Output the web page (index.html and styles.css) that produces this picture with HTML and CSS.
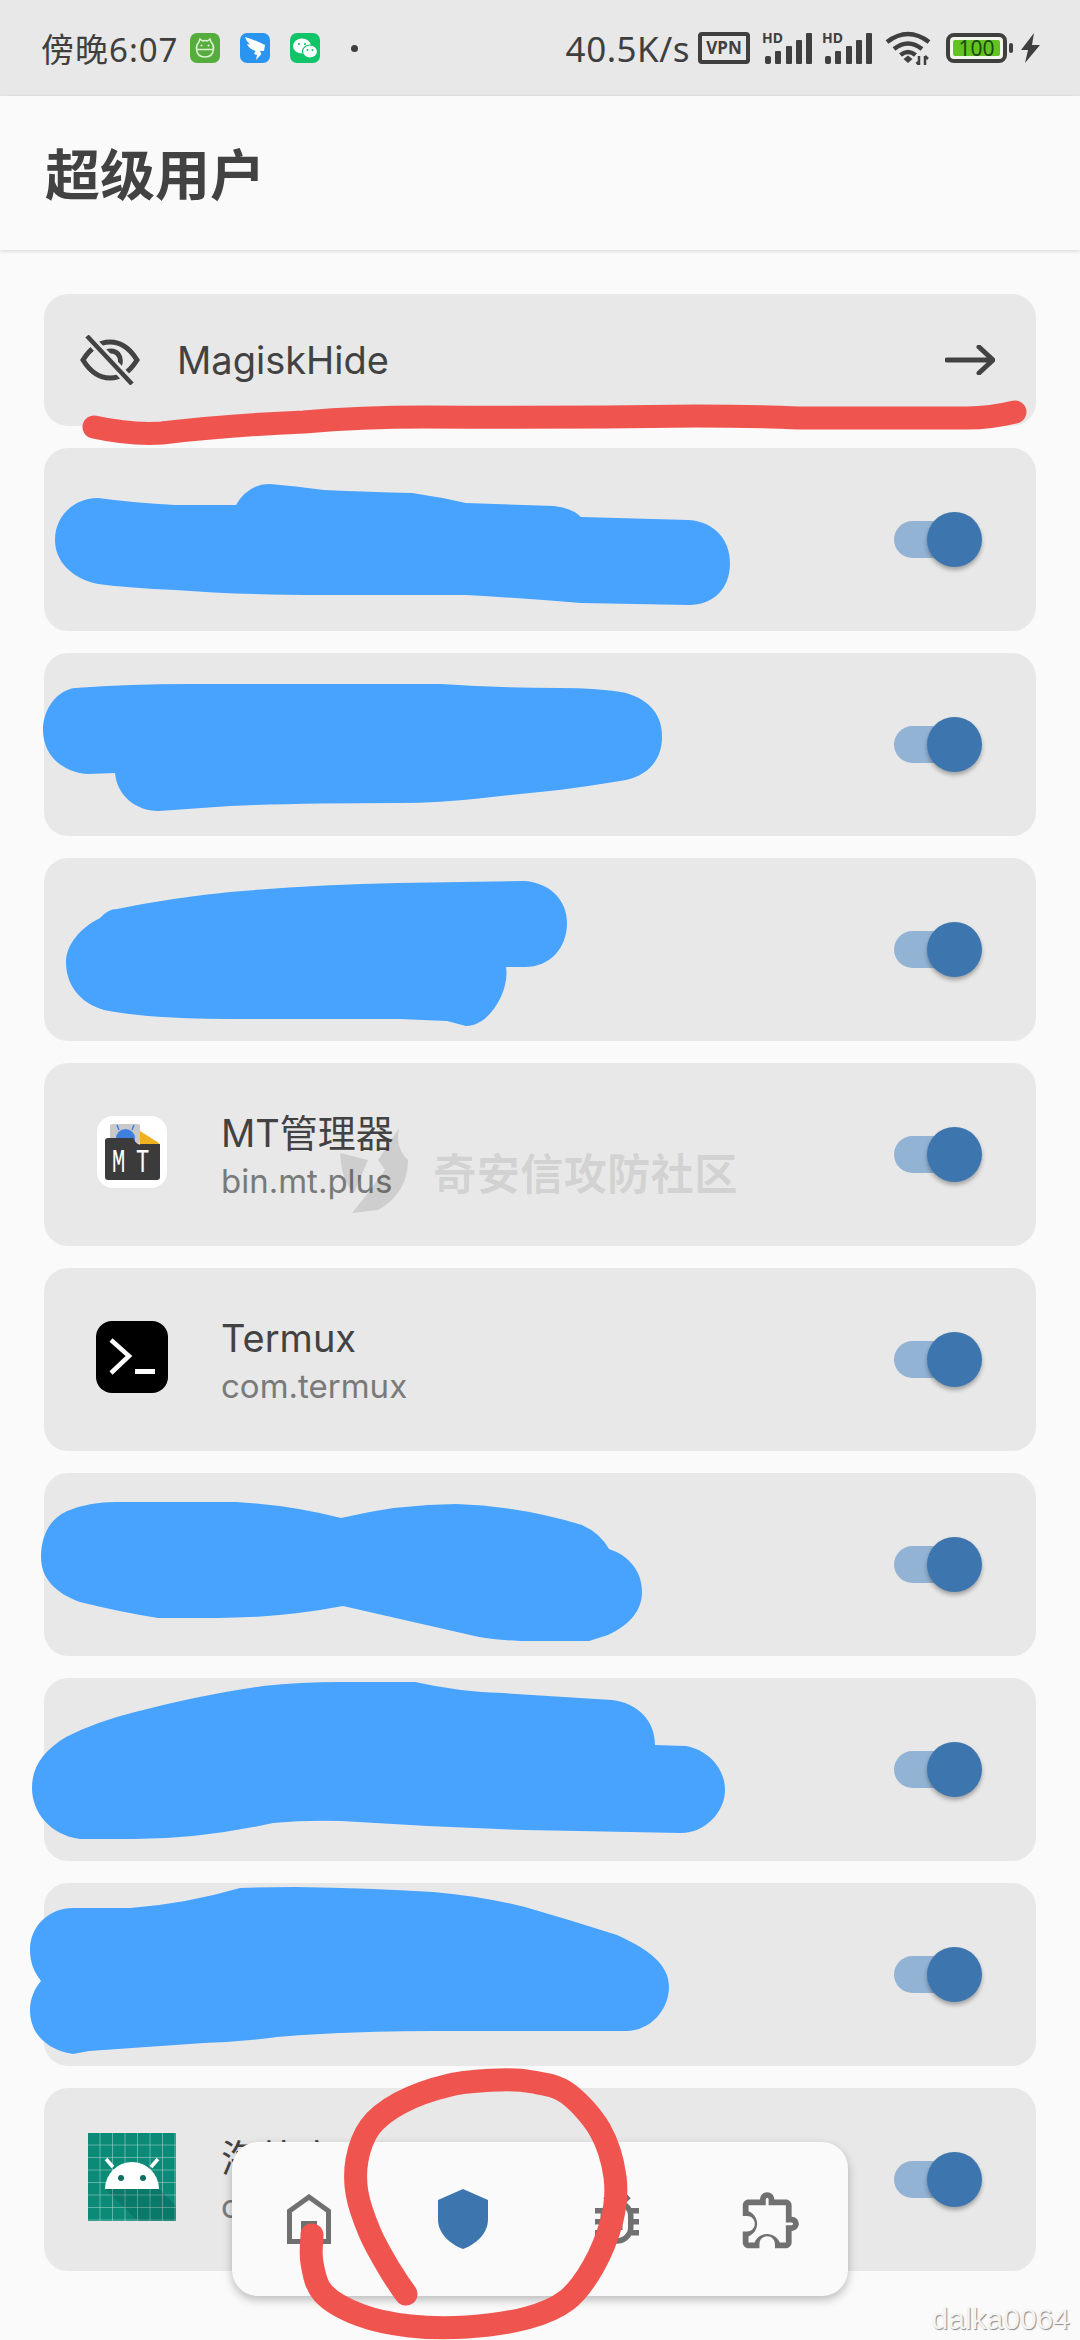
FILE: index.html

```html
<!DOCTYPE html>
<html>
<head>
    <title>超级用户</title>
    <link rel="stylesheet" href="styles.css">
</head>
<body>
    <div class="status-bar">
        <span class="clock">傍晚6:07</span>
        <svg class="note-icon" viewBox="0 0 30 30">
            <rect width="30" height="30" rx="7" fill="#55ad3d"/>
            <path d="M9 9 L10 6 L12.5 8 Q15 7.2 17.5 8 L20 6 L21 9 Q24 12 23.5 16 Q23 24 15 24 Q7 24 6.500 16 Q6 12 9 9Z M7 16.500 H23" fill="none" stroke="#dff3d4" stroke-width="1.500"/>
            <circle cx="11.500" cy="12.500" r="1" fill="#dff3d4"/>
            <circle cx="18.500" cy="12.500" r="1" fill="#dff3d4"/>
        </svg>
        <svg class="note-icon" viewBox="0 0 30 30">
            <rect width="30" height="30" rx="7" fill="#2a95f0"/>
            <path d="M5 4 Q15 7 25 12 L24 18 L20 18 L21.500 21 L16 27 L17 22 L14 21 L15.500 18 Q9 16 7 11 L10 11.500 Q6 8 5 4Z" fill="#fff"/>
        </svg>
        <svg class="note-icon" viewBox="0 0 30 30">
            <rect width="30" height="30" rx="7" fill="#12c468"/>
            <ellipse cx="12" cy="13" rx="9" ry="7.500" fill="#fff"/>
            <ellipse cx="20" cy="18.500" rx="7.500" ry="6.500" fill="#fff" stroke="#12c468" stroke-width="1.200"/>
            <circle cx="9" cy="11" r="1.100" fill="#12c468"/>
            <circle cx="15" cy="11" r="1.100" fill="#12c468"/>
            <circle cx="17.500" cy="17" r="1" fill="#12c468"/>
            <circle cx="22.500" cy="17" r="1" fill="#12c468"/>
        </svg>
        <span class="note-dot"></span>

        <div class="status-right">
            <span class="speed">40.5K/s</span>
            <span class="vpn">VPN</span>
            <svg class="signal" viewBox="0 -6 50 38">
                <text x="0" y="11" class="hd">HD</text>
                <rect x="3" y="24" width="6" height="8" rx="2"/>
                <rect x="13" y="19" width="6" height="13" rx="1"/>
                <rect x="24" y="14" width="6" height="18" rx="1"/>
                <rect x="34" y="8" width="6" height="24" rx="1"/>
                <rect x="44" y="1" width="6" height="31" rx="1"/>
            </svg>
            <svg class="signal signal-second" viewBox="0 -6 50 38">
                <text x="0" y="11" class="hd">HD</text>
                <rect x="3" y="24" width="6" height="8" rx="2"/>
                <rect x="13" y="19" width="6" height="13" rx="1"/>
                <rect x="24" y="14" width="6" height="18" rx="1"/>
                <rect x="34" y="8" width="6" height="24" rx="1"/>
                <rect x="44" y="1" width="6" height="31" rx="1"/>
            </svg>
            <svg class="wifi" viewBox="0 0 46 34">
                <path d="M2 11 Q23 -5 44 11 M9 18 Q23 7 37 18 M15.500 24 Q23 18 30.500 24" fill="none" stroke="#3f3f3f" stroke-width="4.500"/>
                <path d="M18.500 28 L23 24.500 L27.500 28 L23 32Z" fill="#3f3f3f"/>
                <path d="M34 25 V34 M31.500 31 L34 34 M40 34 V25 M40 25 L43 28" fill="none" stroke="#3f3f3f" stroke-width="2.500"/>
            </svg>
            <div class="battery">
                <div class="battery-body"><span class="battery-level">100</span></div>
                <span class="battery-nub"></span>
            </div>
            <svg class="bolt" viewBox="0 0 19 30">
                <path d="M13 0 L0 17 H7 L4 30 L19 12 H11Z" fill="#3f3f3f"/>
            </svg>
        </div>
    </div>

    <div class="app-bar">
        <h1>超级用户</h1>
    </div>

    <div class="list">
        <div class="card card-link">
            <svg class="eye-icon" viewBox="0 0 60 50">
                <path d="M3 25 C11 12 20 7 30 7 C40 7 49 12 57 25 C49 38 40 43 30 43 C20 43 11 38 3 25Z M22 21 C24 16 33 14 38 19 C41 23 41 28 39 31" fill="none" stroke="#424242" stroke-width="5"/>
                <path d="M7 1 L52 49" stroke="#e8e8e8" stroke-width="10"/>
                <path d="M7 1 L52 49" stroke="#424242" stroke-width="4.500"/>
            </svg>
            <span class="card-title">MagiskHide</span>
            <svg class="arrow-icon" viewBox="0 0 50 30">
                <path d="M2 15 H47 M34 2 L48 15 L34 28" fill="none" stroke="#424242" stroke-width="5" stroke-linecap="round"/>
            </svg>
        </div>

        <div class="card">
            <div class="switch"><span class="track"></span><span class="thumb"></span></div>
        </div>
        <div class="card">
            <div class="switch"><span class="track"></span><span class="thumb"></span></div>
        </div>
        <div class="card">
            <div class="switch"><span class="track"></span><span class="thumb"></span></div>
        </div>

        <div class="card">
            <div class="app-icon">
                <svg width="70" height="72" viewBox="0 0 70 72">
                    <rect width="70" height="72" rx="16" fill="#fff"/>
                    <rect x="13" y="8" width="30" height="20" rx="2" fill="#c9c9c9"/>
                    <path d="M19 28 V22 A9.500 9 0 0 1 38 22 V28Z" fill="#3f7fe0"/>
                    <path d="M22 14 L20 9 M35 14 L37 9" stroke="#3f7fe0" stroke-width="1.500"/>
                    <path d="M43 15 L62 27 V32 H43Z" fill="#f0b120"/>
                    <path d="M8 25 Q8 22 11 22 H36 Q40 30 44 28 H63 V61 Q63 64 60 64 H11 Q8 64 8 61Z" fill="#3b3b3b"/>
                    <text transform="translate(15 56) scale(.85 1.25)" class="mt-mark">M</text>
                    <text transform="translate(39 56) scale(.85 1.25)" class="mt-mark">T</text>
                </svg>
            </div>
            <div class="app-info">
                <div class="app-name">MT管理器</div>
                <div class="app-package">bin.mt.plus</div>
            </div>
            <div class="switch"><span class="track"></span><span class="thumb"></span></div>
        </div>

        <div class="card">
            <div class="app-icon">
                <svg width="72" height="72" viewBox="0 0 72 72">
                    <rect width="72" height="72" rx="16" fill="#000"/>
                    <path d="M15 19 L33 35 L15 52" fill="none" stroke="#fff" stroke-width="4.500"/>
                    <rect x="39" y="48" width="20" height="5" fill="#fff"/>
                </svg>
            </div>
            <div class="app-info">
                <div class="app-name">Termux</div>
                <div class="app-package">com.termux</div>
            </div>
            <div class="switch"><span class="track"></span><span class="thumb"></span></div>
        </div>

        <div class="card">
            <div class="switch"><span class="track"></span><span class="thumb"></span></div>
        </div>
        <div class="card">
            <div class="switch"><span class="track"></span><span class="thumb"></span></div>
        </div>
        <div class="card">
            <div class="switch"><span class="track"></span><span class="thumb"></span></div>
        </div>

        <div class="card">
            <div class="app-icon">
                <svg width="88" height="88" viewBox="0 0 88 88">
                    <defs>
                        <pattern id="grid" width="12.500" height="12.500" patternUnits="userSpaceOnUse">
                            <path d="M12.500 0 V12.500 H0" fill="none" stroke="#b5dcd4" stroke-width="1"/>
                        </pattern>
                    </defs>
                    <rect width="88" height="88" fill="#0b8a78"/>
                    <rect width="88" height="88" fill="url(#grid)"/>
                    <path d="M17 56 H71 L88 73 V88 H50Z" fill="#000" opacity=".12"/>
                    <path d="M25 34 L18 26 M63 34 L70 26" stroke="#fff" stroke-width="3.500"/>
                    <path d="M17 56 A27 27 0 0 1 71 56Z" fill="#fff"/>
                    <circle cx="33" cy="45" r="3" fill="#0b6f61"/>
                    <circle cx="55" cy="45" r="3" fill="#0b6f61"/>
                </svg>
            </div>
            <div class="app-info">
                <div class="app-name">海外应用</div>
                <div class="app-package">com.example</div>
            </div>
            <div class="switch"><span class="track"></span><span class="thumb"></span></div>
        </div>
    </div>

    <div class="bottom-nav">
        <div class="nav-item">
            <svg width="44" height="50" viewBox="0 0 44 50">
                <path d="M2.500 47.500 V17 L22 3 L41.500 17 V47.500Z" fill="none" stroke="#707070" stroke-width="5"/>
                <rect x="14" y="27" width="16" height="20" fill="#707070"/>
            </svg>
        </div>
        <div class="nav-item">
            <svg width="50" height="60" viewBox="0 0 50 60">
                <path d="M25 0 L50 11 V30 C50 45 38 55 25 60 C12 55 0 45 0 30 V11Z" fill="#3d76ae"/>
            </svg>
        </div>
        <div class="nav-item">
            <svg width="66" height="66" viewBox="0 0 24 24">
                <path fill="#707070" d="M20 8h-2.810c-.45-.78-1.070-1.450-1.820-1.960L17 4.410 15.590 3l-2.170 2.170C12.960 5.060 12.490 5 12 5c-.49 0-.96.06-1.410.17L8.410 3 7 4.410l1.620 1.630C7.880 6.550 7.260 7.220 6.810 8H4v2h2.090c-.05.33-.09.66-.09 1v1H4v2h2v1c0 .34.04.67.09 1H4v2h2.810c1.040 1.790 2.970 3 5.190 3s4.150-1.210 5.190-3H20v-2h-2.090c.05-.33.09-.66.09-1v-1h2v-2h-2v-1c0-.34-.04-.67-.09-1H20V8zm-4 7c0 .22-.03.47-.07.7l-.1.65-.37.65c-.72 1.240-2.040 2-3.460 2s-2.740-.77-3.460-2l-.37-.64-.1-.65C8.030 15.480 8 15.230 8 15v-4c0-.23.03-.48.07-.7l.1-.65.37-.65c.3-.52.72-.97 1.210-1.310l.57-.39.74-.18c.31-.08.63-.12.94-.12.32 0 .63.04.95.12l.68.16.61.42c.5.34.91.78 1.210 1.310l.38.65.1.65c.04.22.07.47.07.69v4zm-6-1h4v2h-4zm0-4h4v2h-4z"/>
            </svg>
        </div>
        <div class="nav-item">
            <svg width="69" height="69" viewBox="0 0 24 24">
                <path fill="#707070" d="M10.500 4.500c.28 0 .5.22.5.5v2h6v6h2c.28 0 .5.22.5.5s-.22.5-.5.5h-2v6h-2.120c-.68-1.750-2.390-3-4.380-3s-3.700 1.250-4.380 3H4v-2.120c1.750-.68 3-2.390 3-4.380 0-1.990-1.240-3.700-2.990-4.380L4 7h6V5c0-.28.22-.5.5-.5m0-2C9.120 2.500 8 3.620 8 5H4c-1.100 0-1.990.9-1.990 2v3.800h1.490c1.490 0 2.700 1.210 2.700 2.700s-1.210 2.700-2.700 2.700H2V20c0 1.100.9 2 2 2h3.800v-1.500c0-1.490 1.210-2.700 2.700-2.700s2.700 1.210 2.700 2.700V22H17c1.100 0 2-.9 2-2v-4c1.380 0 2.500-1.120 2.500-2.500S20.380 11 19 11V7c0-1.100-.9-2-2-2h-4c0-1.380-1.120-2.500-2.500-2.500z"/>
            </svg>
        </div>
    </div>

    <!-- hand drawn marks on top of the screenshot -->
    <svg class="scribbles" viewBox="0 0 1080 2340">
        <g fill="#48a3fe">
            <path d="M98 498 Q135 503 175 505 L236 505 Q248 484 270 484 Q295 486 324 490 Q370 492 412 493 Q440 497 466 503 L554 506 Q572 508 581 517 L689 520 C715 522 730 540 730 563 C730 590 712 605 689 605 L581 603 Q520 598 466 595 H324 Q240 595 175 590 Q130 588 98 584 C70 578 55 560 55 540 C55 515 75 498 98 498Z"/>
            <path d="M75 688 Q130 684 188 684 H441 Q500 688 559 688 Q600 688 626 693 C650 700 662 715 662 737 C662 760 648 775 626 780 Q590 786 559 790 Q520 794 483 798 Q440 803 399 803 Q300 803 230 806 L159 811 C135 811 117 795 115 773 L87 774 C62 772 43 755 43 730 C43 708 58 690 75 688Z"/>
            <path d="M117 909 Q170 898 230 892 Q310 885 399 883 L525 881 C550 883 567 900 567 923 C567 948 550 967 525 967 H506 C510 990 490 1026 466 1026 L447 1021 L399 1019 H230 Q150 1019 104 1010 C80 1003 66 985 66 962 C66 945 80 928 100 918 Q108 909 117 909Z"/>
            <path d="M116 1502 H236 Q290 1505 341 1518 Q400 1504 456 1504 Q520 1506 582 1525 Q600 1533 609 1549 C630 1556 642 1572 642 1592 C642 1610 630 1625 608 1635 L589 1641 H520 Q495 1640 479 1637 L343 1606 Q280 1618 217 1618 H158 Q120 1612 80 1602 C55 1593 41 1578 41 1557 C41 1530 55 1515 70 1510 Q90 1502 116 1502Z"/>
            <path d="M341 1682 H415 Q460 1692 502 1693 L612 1700 C637 1703 655 1720 655 1745 L686 1746 C708 1750 725 1768 725 1790 C725 1812 705 1833 681 1833 L525 1830 Q433 1827 341 1821 Q305 1820 273 1823 Q200 1839 135 1839 H80 C50 1835 32 1812 32 1788 C32 1765 45 1750 66 1737 Q95 1722 135 1712 Q200 1695 263 1686 Q300 1682 341 1682Z"/>
            <path d="M73 1908 H130 Q185 1904 240 1888 Q265 1887 295 1887 Q370 1888 433 1892 Q480 1896 525 1907 Q570 1920 617 1935 C650 1950 669 1965 669 1987 C669 2010 650 2031 626 2031 H433 Q350 2031 277 2037 Q240 2042 204 2043 L89 2051 L73 2054 C48 2050 30 2035 30 2010 C30 1998 35 1988 41 1981 C34 1972 30 1962 30 1950 C30 1925 50 1908 73 1908Z"/>
        </g>
        <g fill="none" stroke="#f0544f" stroke-linecap="round" stroke-linejoin="round">
            <path stroke-width="23" d="M94 427 Q130 435 162 433 Q230 425 304 422 Q360 417 426 417 Q560 418 696 416 Q750 416 798 418 H967 Q990 418 1015 412"/>
            <path stroke-width="23" d="M312 2235 C312 2240 310 2253 312 2263 C314 2273 315 2284 323 2293 C331 2302 345.500 2309.500 360 2315 C374.500 2320.500 392 2324 410 2326 C428 2328 447.500 2328.300 467 2327 C486.500 2325.700 510 2322.500 527 2318 C544 2313.500 556 2308.500 567 2300 C578 2291.500 585.500 2280 593 2267 C600.500 2254 608 2235 612 2220 C615.700 2205 617 2192 615 2177 C613 2162 608 2144 600 2130 C592 2116 578 2101 567 2093 C556 2085 544 2084 533 2082 C522 2080 514 2079.500 500 2080 C486 2080.500 467 2081 450 2085 C433 2089 413 2096 400 2103 C387 2110 377 2117.500 370 2127 C363 2136.500 359 2149 357 2160 C355 2171 355 2181 357 2193 C359 2205 364.500 2220 370 2233 C375.500 2246 384 2260 390 2270 C396 2280 403 2290 406 2294"/>
        </g>
    </svg>

    <div class="watermark">
        <svg width="68" height="85" viewBox="0 0 68 85">
            <path d="M0 25 L28 32 L14 65 Q2 55 0 25Z M59 0 Q55 20 68 32 Q68 65 38 82 L12 85 L28 65 L45 42 L38 32Z" fill="#000" opacity=".11"/>
        </svg>
        <span class="watermark-text">奇安信攻防社区</span>
    </div>
    <div class="user-tag">dalka0064</div>
</body>
</html>
```

FILE: styles.css

```css
body {
    position: relative;
    width: 1080px;
    height: 2340px;
    margin: 0;
    overflow: hidden;
    background-color: #fafafa;
    color: #424242;
    font-family: "Inter", "Noto Sans CJK SC", sans-serif;
}

/* status bar */
.status-bar {
    display: flex;
    align-items: center;
    height: 96px;
    padding: 0 40px 0 41px;
    box-sizing: border-box;
    background-color: #e8e8e8;
    color: #3f3f3f;
}
.clock {
    width: 149px;
    font-family: "Noto Sans", "Noto Sans CJK SC", sans-serif;
    font-size: 33px;
    letter-spacing: 1px;
    white-space: nowrap;
}
.note-icon {
    width: 30px;
    height: 30px;
    margin-right: 20px;
}
.note-dot {
    width: 7px;
    height: 7px;
    margin-left: 11px;
    border-radius: 50%;
    background-color: #3f3f3f;
}
.status-right {
    display: flex;
    align-items: center;
    margin-left: auto;
}
.speed {
    font-family: "Noto Sans", sans-serif;
    font-size: 35px;
    letter-spacing: 0.5px;
    margin-right: 8px;
}
.vpn {
    width: 52px;
    height: 32px;
    box-sizing: border-box;
    border: 4px solid #3f3f3f;
    border-radius: 4px;
    font-family: "Noto Sans", sans-serif;
    font-size: 17px;
    font-weight: 700;
    line-height: 24px;
    text-align: center;
}
.signal {
    width: 50px;
    height: 38px;
    margin-left: 12px;
    margin-bottom: 6px;
    fill: #3f3f3f;
}
.signal-second {
    margin-left: 10px;
}
.hd {
    font-family: "Noto Sans", sans-serif;
    font-size: 14px;
    font-weight: 700;
}
.wifi {
    width: 46px;
    height: 34px;
    margin-left: 13px;
}
.battery {
    display: flex;
    align-items: center;
    margin-left: 15px;
}
.battery-body {
    width: 61px;
    height: 30px;
    box-sizing: border-box;
    padding: 3px;
    border: 4px solid #3f3f3f;
    border-radius: 8px;
    background-color: #f2f7ec;
}
.battery-level {
    display: block;
    height: 16px;
    border-radius: 2px;
    background-color: #62c322;
    color: #1d4a10;
    font-family: "Noto Sans", sans-serif;
    font-size: 21px;
    line-height: 16px;
    text-align: center;
}
.battery-nub {
    width: 4px;
    height: 10px;
    margin-left: 2px;
    border-radius: 2px;
    background-color: #3f3f3f;
}
.bolt {
    width: 19px;
    height: 30px;
    margin-left: 8px;
}

/* title */
.app-bar {
    height: 154px;
    padding-left: 45px;
    box-shadow: 0 1px 4px rgba(0, 0, 0, 0.15);
}
.app-bar h1 {
    margin: 0;
    font-family: "Noto Sans CJK SC", sans-serif;
    font-size: 55px;
    font-weight: 700;
    line-height: 150px;
}

/* list */
.list {
    display: flex;
    flex-direction: column;
    gap: 22px;
    padding: 44px 44px 0;
}
.card {
    display: flex;
    align-items: center;
    height: 183px;
    padding: 0 54px 0 44px;
    box-sizing: border-box;
    border-radius: 24px;
    background-color: #e8e8e8;
}
.card-link {
    height: 132px;
    padding: 0 41px 0 36px;
}
.eye-icon {
    width: 60px;
    height: 50px;
}
.card-title {
    margin-left: 37px;
    font-size: 38px;
}
.arrow-icon {
    width: 50px;
    height: 30px;
    margin-left: auto;
}
.app-icon {
    display: flex;
    justify-content: center;
    width: 88px;
    margin-bottom: 6px;
    flex-shrink: 0;
}
.app-info {
    margin-left: 45px;
}
.app-name {
    font-size: 38px;
    line-height: 50px;
}
.app-package {
    margin-top: 2px;
    color: #7a7a7a;
    font-size: 33px;
    line-height: 42px;
}
.mt-mark {
    fill: #fff;
    font-family: "Liberation Mono", monospace;
    font-size: 26px;
}
.switch {
    display: flex;
    align-items: center;
    margin-left: auto;
}
.track {
    width: 70px;
    height: 37px;
    border-radius: 19px;
    background-color: #93b3d4;
}
.thumb {
    width: 55px;
    height: 55px;
    margin-left: -37px;
    border-radius: 50%;
    background-color: #3d76ae;
    box-shadow: 0 3px 4px rgba(0, 0, 0, 0.3);
}

/* floating nav */
.bottom-nav {
    position: absolute;
    left: 232px;
    top: 2142px;
    display: flex;
    width: 616px;
    height: 154px;
    border-radius: 26px;
    background-color: #fafafa;
    box-shadow: 0 4px 10px rgba(0, 0, 0, 0.25);
}
.nav-item {
    display: flex;
    flex: 1;
    align-items: center;
    justify-content: center;
}

/* overlays */
.scribbles {
    position: absolute;
    left: 0;
    top: 0;
    width: 1080px;
    height: 2340px;
}
.watermark {
    position: absolute;
    left: 340px;
    top: 1128px;
    display: flex;
    align-items: center;
    gap: 25px;
}
.watermark-text {
    margin-top: 2px;
    color: rgba(0, 0, 0, 0.09);
    font-family: "Noto Sans CJK SC", sans-serif;
    font-size: 43.500px;
    font-weight: 700;
    white-space: nowrap;
}
.user-tag {
    position: absolute;
    right: 10px;
    bottom: 4px;
    color: #f4f4f4;
    font-family: "Liberation Sans", sans-serif;
    font-size: 30px;
    text-shadow: 1px 1px 1px #8a8a8a;
}
```
